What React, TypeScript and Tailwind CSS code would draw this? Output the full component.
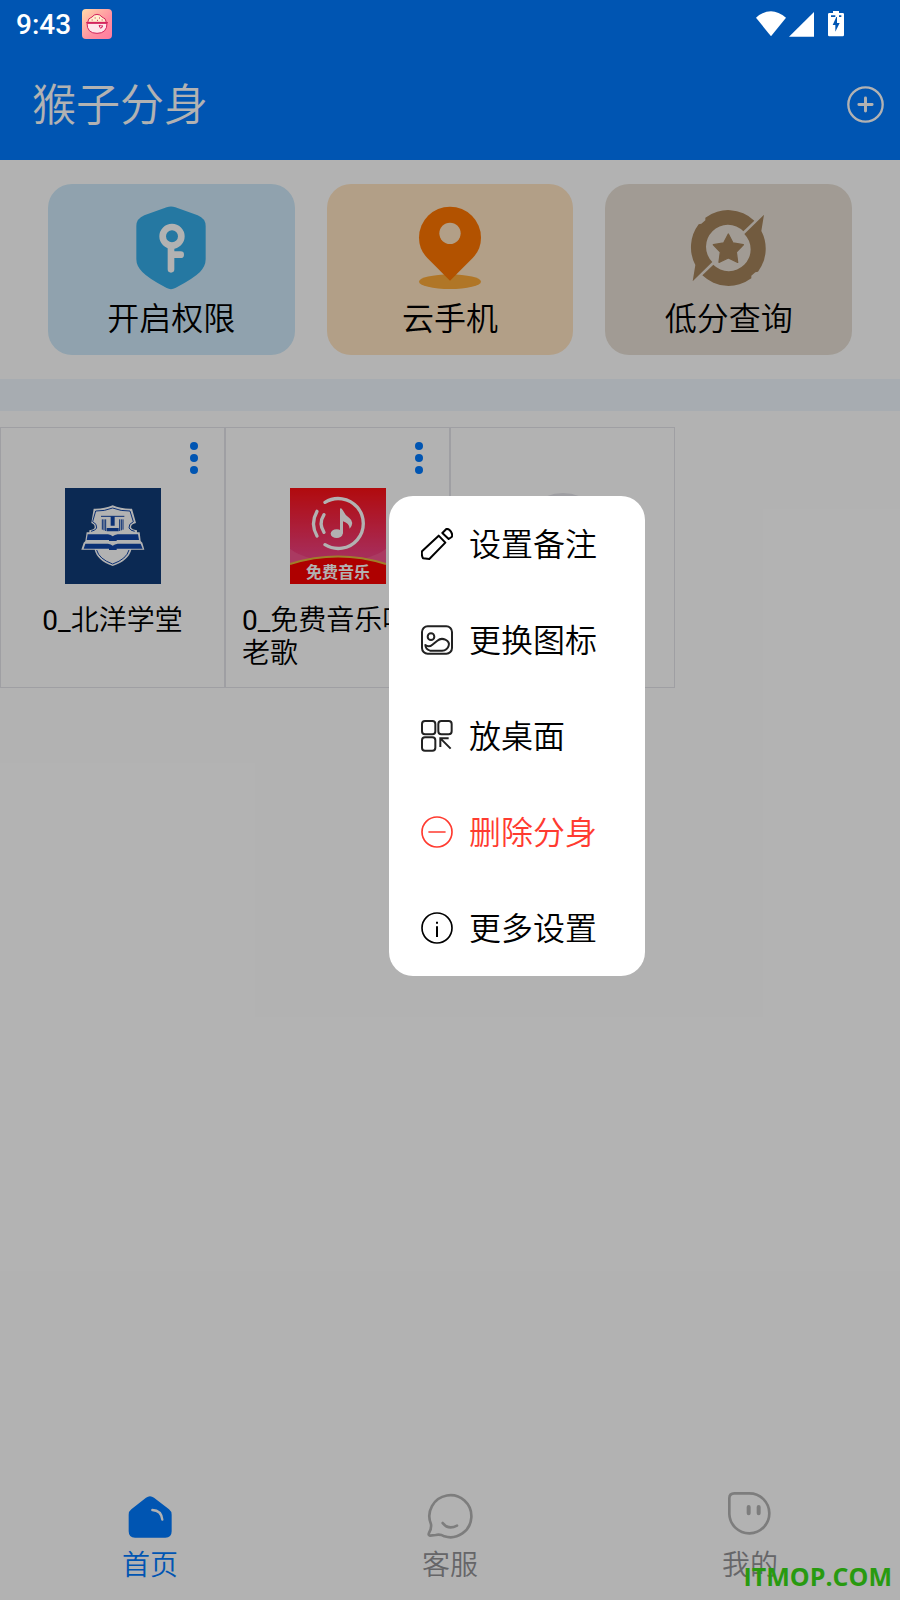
import type { ReactNode } from 'react'

type IconProps = { viewBox: string; className: string; children: ReactNode }

function Icon({ viewBox, className, children }: IconProps) {
  return (
    <svg viewBox={viewBox} className={className} fill="none" aria-hidden="true">
      {children}
    </svg>
  )
}

const shortcuts = [
  {
    label: '开启权限',
    tint: 'bg-[#cee9f9]',
    icon: (
      <Icon viewBox="291 102 264 264" className="size-[88px]">
        <path
          d="M410 112Q423 107 436 112L503 136Q527 146 527 168V268Q527 288 510 306Q490 326 436 354Q423 361 410 354Q356 326 337 306Q319 288 319 268V168Q319 146 343 136Z"
          fill="#35ade9"
        />
        <g stroke="#fff" strokeWidth="20" strokeLinecap="round">
          <circle cx="426" cy="199" r="28" />
          <path d="M423 232V298M423 254H452" />
        </g>
      </Icon>
    ),
  },
  {
    label: '云手机',
    tint: 'bg-[#ffe4c2]',
    icon: (
      <Icon viewBox="288 102 264 264" className="size-[88px]">
        <ellipse cx="420" cy="335" rx="93" ry="22" fill="#fdaa38" />
        <path
          d="M420 332L352 264Q327 238 327 203A93 93 0 0 1 513 203Q513 238 488 264Z"
          fill="#ff7600"
        />
        <circle cx="420" cy="190" r="32" fill="#ffe4c2" />
      </Icon>
    ),
  },
  {
    label: '低分查询',
    tint: 'bg-[#e7dfd5]',
    icon: (
      <Icon viewBox="284 102 264 264" className="size-[88px]">
        <g fill="#a4835b">
          <path
            id="badge-half"
            d="M307 334L315 285A114 114 0 0 1 325 163L333 161L345 151V143A114 114 0 0 1 492 152L459 184A65 65 0 0 0 366 276Z"
          />
          <use href="#badge-half" transform="rotate(180 414 234)" />
          <path
            d="M414 192L428 219L459 224L438 246L442 277L414 264L386 277L390 246L369 224L400 219Z"
            stroke="#a4835b"
            strokeWidth="4"
            strokeLinejoin="round"
          />
        </g>
      </Icon>
    ),
  },
]

const clones = [
  {
    name: '0_北洋学堂',
    icon: (
      <Icon viewBox="192 234 288 288" className="size-24">
        <path d="M192 234H480V522H192Z" fill="#113b78" />
        <path
          d="M335 286Q360 297 393 296L405 339Q390 342 390 352Q392 359 408 361V367H416L419 393L424 398L430 419H391Q383 451 335 468Q288 451 281 419H241L248 398L253 393L257 367H265V361Q281 359 281 352Q281 342 271 339L278 296Q310 297 335 286Z"
          fill="#fff"
        />
        <g stroke="#1045a8" strokeWidth="3">
          <path d="M335 294Q360 304 387 303L397 335Q382 342 384 354Q388 362 401 364M335 294Q310 304 284 303L275 335Q289 342 287 354Q283 362 270 364" />
          <path d="M287 420Q294 447 335 462Q377 447 384 420M300 319H370" />
          <path d="M304 328V359M309 328V361M314 328V363M356 328V363M361 328V361M366 328V359" />
        </g>
        <path
          d="M329 319H341V347H329ZM317 354H353V364H317ZM260 373H321Q330 374 335 379Q341 374 350 373H411L414 390H347V393H324V390H257ZM253 401H321Q330 402 335 407Q341 402 350 401H419L425 416H347V420H324V416H248Z"
          fill="#1045a8"
        />
      </Icon>
    ),
  },
  {
    name: '0_免费音乐听老歌',
    icon: (
      <Icon viewBox="207 234 288 288" className="size-24">
        <defs>
          <linearGradient id="music" x1="0" y1="0" x2="0" y2="1">
            <stop offset="0" stopColor="#fe1014" />
            <stop offset="0.7" stopColor="#f04080" />
            <stop offset="1" stopColor="#f04080" />
          </linearGradient>
        </defs>
        <path d="M207 234H495V522H207Z" fill="url(#music)" />
        <path d="M207 416Q230 435 275 446L207 470ZM495 416Q472 435 427 446L495 470Z" fill="#f7689a" fillOpacity=".5" />
        <path d="M207 463Q351 418 495 463V522H207Z" fill="#f90000" />
        <path d="M207 462Q351 417 495 462" stroke="#e5b53b" strokeWidth="6" />
        <g stroke="#fff" strokeWidth="10" strokeLinecap="round">
          <path d="M312 277A75 75 0 1 1 312 404" />
          <path d="M288 304Q267 341 288 378M309 314Q292 341 309 367" />
        </g>
        <ellipse cx="347" cy="371" rx="18" ry="13" fill="#fff" />
        <path d="M357 296Q361 293 365 300Q372 315 385 324Q402 337 386 356Q385 340 366 334V371H357Z" fill="#fff" />
        <text
          x="351"
          y="504"
          fill="#fff"
          textAnchor="middle"
          className="font-['Noto_Sans_CJK_SC',sans-serif] text-[48px] font-bold"
        >
          免费音乐
        </text>
      </Icon>
    ),
  },
]

const menuItems = [
  {
    label: '设置备注',
    color: 'text-black',
    icon: (
      <Icon viewBox="123 144 96 96" className="size-8">
        <g stroke="currentColor" strokeWidth="6" strokeLinejoin="round">
          <path d="M126 214L176 167L196 188L148 237L129 235Q124 226 126 214Z" />
          <path d="M187 159L199 147Q206 145 213 155Q219 165 215 171L206 177Z" />
        </g>
      </Icon>
    ),
  },
  {
    label: '更换图标',
    color: 'text-black',
    icon: (
      <Icon viewBox="123 431 96 96" className="size-8">
        <g stroke="#222" strokeWidth="6" strokeLinejoin="round">
          <rect x="126" y="438" width="90" height="82" rx="17" />
          <circle cx="153" cy="469" r="10" />
          <path d="M136 494Q147 502 157 493L172 481Q183 472 196 478Q210 485 206 496Q202 510 186 511H150Q137 507 136 494Z" />
        </g>
      </Icon>
    ),
  },
  {
    label: '放桌面',
    color: 'text-black',
    icon: (
      <Icon viewBox="123 90 96 96" className="size-8">
        <g stroke="#222" strokeWidth="6">
          <rect x="126" y="93" width="40" height="40" rx="9" />
          <rect x="175" y="93" width="40" height="40" rx="9" />
          <rect x="126" y="142" width="40" height="40" rx="9" />
          <path d="M206 145H181V171M182 146L212 176" />
        </g>
      </Icon>
    ),
  },
  {
    label: '删除分身',
    color: 'text-[#ff3b30]',
    icon: (
      <Icon viewBox="123 378 96 96" className="size-8">
        <g stroke="currentColor" strokeWidth="5" strokeLinecap="round">
          <circle cx="171" cy="426" r="45" />
          <path d="M147 426H195" />
        </g>
      </Icon>
    ),
  },
  {
    label: '更多设置',
    color: 'text-black',
    icon: (
      <Icon viewBox="123 666 96 96" className="size-8">
        <circle cx="171" cy="714" r="45" stroke="currentColor" strokeWidth="5" />
        <path d="M171 709V741M171 695V701" stroke="currentColor" strokeWidth="6" />
      </Icon>
    ),
  },
]

const tabs = [
  {
    label: '首页',
    color: 'text-[#007aff]',
    icon: (
      <Icon viewBox="138 66 144 144" className="size-12">
        <path
          d="M198 83Q210 74 222 83L267 118Q275 124 275 134V184Q275 203 256 203H165Q146 203 146 184V134Q146 124 154 118Z"
          fill="currentColor"
        />
        <path d="M217 120Q244 121 247 149" stroke="#fff" strokeWidth="7" strokeLinecap="round" />
      </Icon>
    ),
  },
  {
    label: '客服',
    color: 'text-[#929296]',
    icon: (
      <Icon viewBox="1040 66 144 144" className="size-12">
        <g stroke="#b4b4b4" strokeWidth="8" strokeLinecap="round" strokeLinejoin="round">
          <path d="M1055 163A63 63 0 1 1 1095 199Q1083 192 1069 195L1052 197Q1046 196 1049 189Q1057 175 1055 163Z" />
          <path d="M1090 159Q1107 181 1133 167" />
        </g>
      </Icon>
    ),
  },
  {
    label: '我的',
    color: 'text-[#929296]',
    icon: (
      <Icon viewBox="138 66 144 144" className="size-12">
        <path
          d="M148 132V85Q148 70 163 70H208A60 60 0 1 1 148 132Z"
          stroke="#b4b4b4"
          strokeWidth="8"
        />
        <path d="M206 111V130M236 111V130" stroke="#b4b4b4" strokeWidth="12" strokeLinecap="round" />
      </Icon>
    ),
  },
]

function StatusBar() {
  return (
    <div className="relative z-20 flex h-12 items-center pr-14 pl-4 text-white">
      <span className="pt-0.5 text-[28px] leading-8 font-medium">9:43</span>
      <Icon viewBox="246 27 90 90" className="ml-[11px] size-[30px]">
        <defs>
          <linearGradient id="rice" x1="0" y1="0" x2="1" y2="1">
            <stop offset="0" stopColor="#ffdbaa" />
            <stop offset="0.6" stopColor="#ff8fa0" />
            <stop offset="1" stopColor="#ff7ba0" />
          </linearGradient>
        </defs>
        <rect x="246" y="27" width="90" height="90" rx="12" fill="url(#rice)" />
        <g stroke="#d3225b" strokeWidth="3">
          <path d="M263 67Q264 54 276 51Q282 43 291 43Q300 43 306 51Q318 54 319 67Z" fill="#fff0cf" />
          <path d="M261 70H321Q321 100 291 100Q261 100 261 70Z" fill="#ffe6ea" />
          <path d="M258 68H324" />
          <path d="M297 77Q302 74 303 79Q306 74 309 79L302 85Z" />
          <path d="M275 60H278M284 54H287M291 61H294M297 54H300M305 60H308" />
        </g>
      </Icon>
      <Icon viewBox="168 33 90 78" className="ml-auto h-[26px] w-[30px]">
        <path d="M168 53Q213 14 258 53L213 109Z" fill="currentColor" />
      </Icon>
      <Icon viewBox="266 33 75 78" className="ml-[3px] h-[26px] w-[25px]">
        <path d="M266 110L341 36V110Z" fill="currentColor" />
      </Icon>
      <Icon viewBox="384 33 48 78" className="ml-[14px] h-[26px] w-4">
        <path d="M399 33H417V39H428Q432 39 432 43V105Q432 109 428 109H388Q384 109 384 105V43Q384 39 388 39H399Z" fill="currentColor" />
        <path d="M409 51L398 75H406V95L419 69H411V51ZM393 46H406V51H393ZM417 46H424V51H417Z" fill="#0055b3" />
      </Icon>
    </div>
  )
}

export default function App() {
  return (
    <div className="relative flex min-h-screen flex-col overflow-hidden bg-white font-[Roboto,'Noto_Sans_CJK_SC_DemiLight','Noto_Sans_CJK_SC',sans-serif] text-black">
      <header className="bg-[#007aff]">
        <StatusBar />
        <div className="flex h-28 items-center justify-between pr-4 pl-8">
          <h1 className="pt-1 text-[44px] leading-[56px] text-white">猴子分身</h1>
          <button aria-label="添加">
            <Icon viewBox="440 254 112 112" className="size-[37px]">
              <circle cx="496" cy="310" r="52" stroke="#fff" strokeWidth="7" />
              <path d="M496 290V330M476 310H516" stroke="#fff" strokeWidth="9" strokeLinecap="round" />
            </Icon>
          </button>
        </div>
      </header>

      {/* Shortcuts */}
      <section className="grid grid-cols-3 gap-8 px-12 py-6">
        {shortcuts.map((item) => (
          <button
            key={item.label}
            className={`flex flex-col items-center rounded-3xl pt-5 pb-[14px] ${item.tint}`}
          >
            {item.icon}
            <span className="mt-[5px] text-[32px] leading-[44px]">{item.label}</span>
          </button>
        ))}
      </section>
      <div className="h-8 bg-[#f0f7fe]" />

      {/* Cloned apps */}
      <main className="mt-4 grid grid-cols-4">
        {clones.map((app) => (
          <div
            key={app.name}
            className="flex flex-col items-center border border-[#e4e4ea] px-4 pt-3 pb-[17px]"
          >
            <button aria-label="更多" className="mr-2 self-end">
              <Icon viewBox="0 0 12 36" className="h-9 w-3">
                <g fill="#007aff">
                  <circle cx="6" cy="6" r="4" />
                  <circle cx="6" cy="18" r="4" />
                  <circle cx="6" cy="30" r="4" />
                </g>
              </Icon>
            </button>
            <div className="mt-3">{app.icon}</div>
            <p className="mt-5 text-[28px] leading-[33px] break-all">{app.name}</p>
          </div>
        ))}
        <div className="flex flex-col items-center border border-[#e4e4ea] pt-[60px]">
          <button aria-label="添加分身">
            <Icon viewBox="0 0 96 96" className="size-24">
              <circle cx="48" cy="48" r="43" fill="#e4e4ea" />
              <path d="M48 28V68M28 48H68" stroke="#fff" strokeWidth="6" strokeLinecap="round" />
            </Icon>
          </button>
        </div>
      </main>

      {/* Tab bar */}
      <nav className="mt-auto grid grid-cols-3 pb-[18px]">
        {tabs.map((tab) => (
          <a key={tab.label} href="#" className={`flex flex-col items-center ${tab.color}`}>
            {tab.icon}
            <span className="mt-2.5 text-[28px] leading-8">{tab.label}</span>
          </a>
        ))}
      </nav>

      {/* Scrim and popup menu */}
      <div className="absolute inset-0 z-10 bg-black/30" />
      <div
        role="menu"
        className="absolute top-[496px] left-[389px] z-20 flex w-64 flex-col overflow-hidden rounded-3xl bg-white"
      >
        {menuItems.map((item) => (
          <button
            key={item.label}
            role="menuitem"
            className={`flex h-24 items-center gap-4 px-8 text-[32px] leading-10 ${item.color}`}
          >
            {item.icon}
            <span className="pt-0.5">{item.label}</span>
          </button>
        ))}
      </div>

      <span className="absolute right-2 bottom-1.5 z-20 font-['Open_Sans',sans-serif] text-[25px] leading-9 font-bold text-[#289a10]">
        ITMOP.COM
      </span>
    </div>
  )
}
